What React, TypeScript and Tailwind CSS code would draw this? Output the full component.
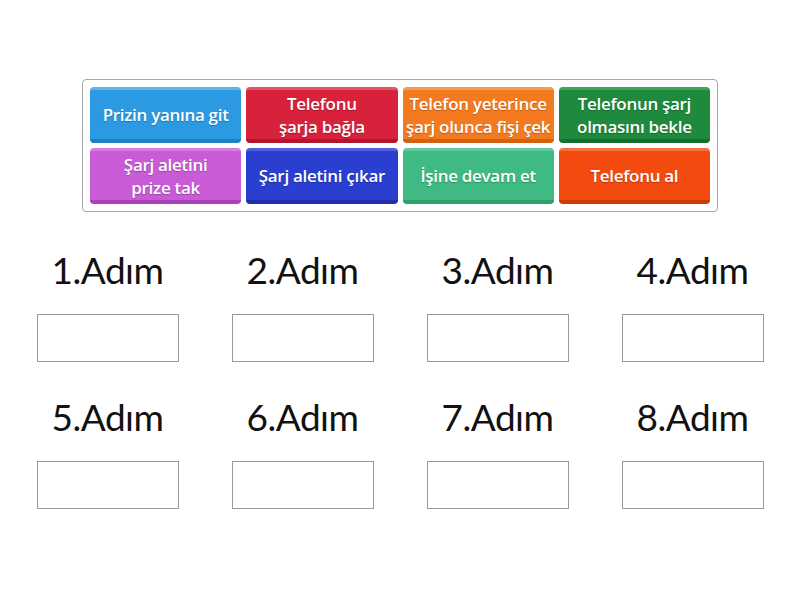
const tiles = [
  { lines: ["Prizin yanına git"], cls: "bg-[#2b9ae2] border-t-[#5db5ec] border-b-[#1f7fc0]" },
  { lines: ["Telefonu", "şarja bağla"], cls: "bg-[#d8213a] border-t-[#e45466] border-b-[#b3152c]" },
  { lines: ["Telefon yeterince", "şarj olunca fişi çek"], cls: "bg-[#f47a1f] border-t-[#f89a50] border-b-[#d2620f]" },
  { lines: ["Telefonun şarj", "olmasını bekle"], cls: "bg-[#1f8a3d] border-t-[#3aa85a] border-b-[#15702f]" },
  { lines: ["Şarj aletini", "prize tak"], cls: "bg-[#c85bd6] border-t-[#d67ce2] border-b-[#ab3fbc]" },
  { lines: ["Şarj aletini çıkar"], cls: "bg-[#2a3ed0] border-t-[#4f60dc] border-b-[#1f2fae]" },
  { lines: ["İşine devam et"], cls: "bg-[#3fba82] border-t-[#62c99a] border-b-[#2f9e6b]" },
  { lines: ["Telefonu al"], cls: "bg-[#f24a0f] border-t-[#f6703f] border-b-[#cf3a05]" },
];

const steps = ["1.Adım", "2.Adım", "3.Adım", "4.Adım", "5.Adım", "6.Adım", "7.Adım", "8.Adım"];

export default function App() {
  return (
    <div className="w-[800px] h-[600px] bg-white font-['Lato',sans-serif] text-black">
      {/* Answer tiles */}
      <div className="pt-[79px] flex justify-center">
        <div className="w-[636px] border border-[#a8a8a8] rounded-[4px] p-[7px] grid grid-cols-4 gap-[5px]">
          {tiles.map((t) => (
            <div
              key={t.lines.join(" ")}
              className={`h-[56px] rounded-[4px] border-t-[3px] border-b-[4px] flex flex-col items-center justify-center text-center whitespace-nowrap text-white font-['Open_Sans',sans-serif] font-semibold text-[17px] leading-[23px] tracking-[-0.3px] [text-shadow:0_1px_1px_rgba(0,0,0,0.25)] ${t.cls}`}
            >
              {t.lines.map((l) => (
                <span key={l}>{l}</span>
              ))}
            </div>
          ))}
        </div>
      </div>

      {/* Drop targets */}
      <div className="px-[10px] mt-[38px] grid grid-cols-4 gap-y-[35px]">
        {steps.map((s) => (
          <div key={s} className="flex flex-col items-center">
            <div className="text-[37px] leading-[40px] tracking-[-0.5px] text-[#111]">{s}</div>
            <div className="mt-[24px] w-[142px] h-[48px] border border-[#9a9a9a]" />
          </div>
        ))}
      </div>
    </div>
  );
}
